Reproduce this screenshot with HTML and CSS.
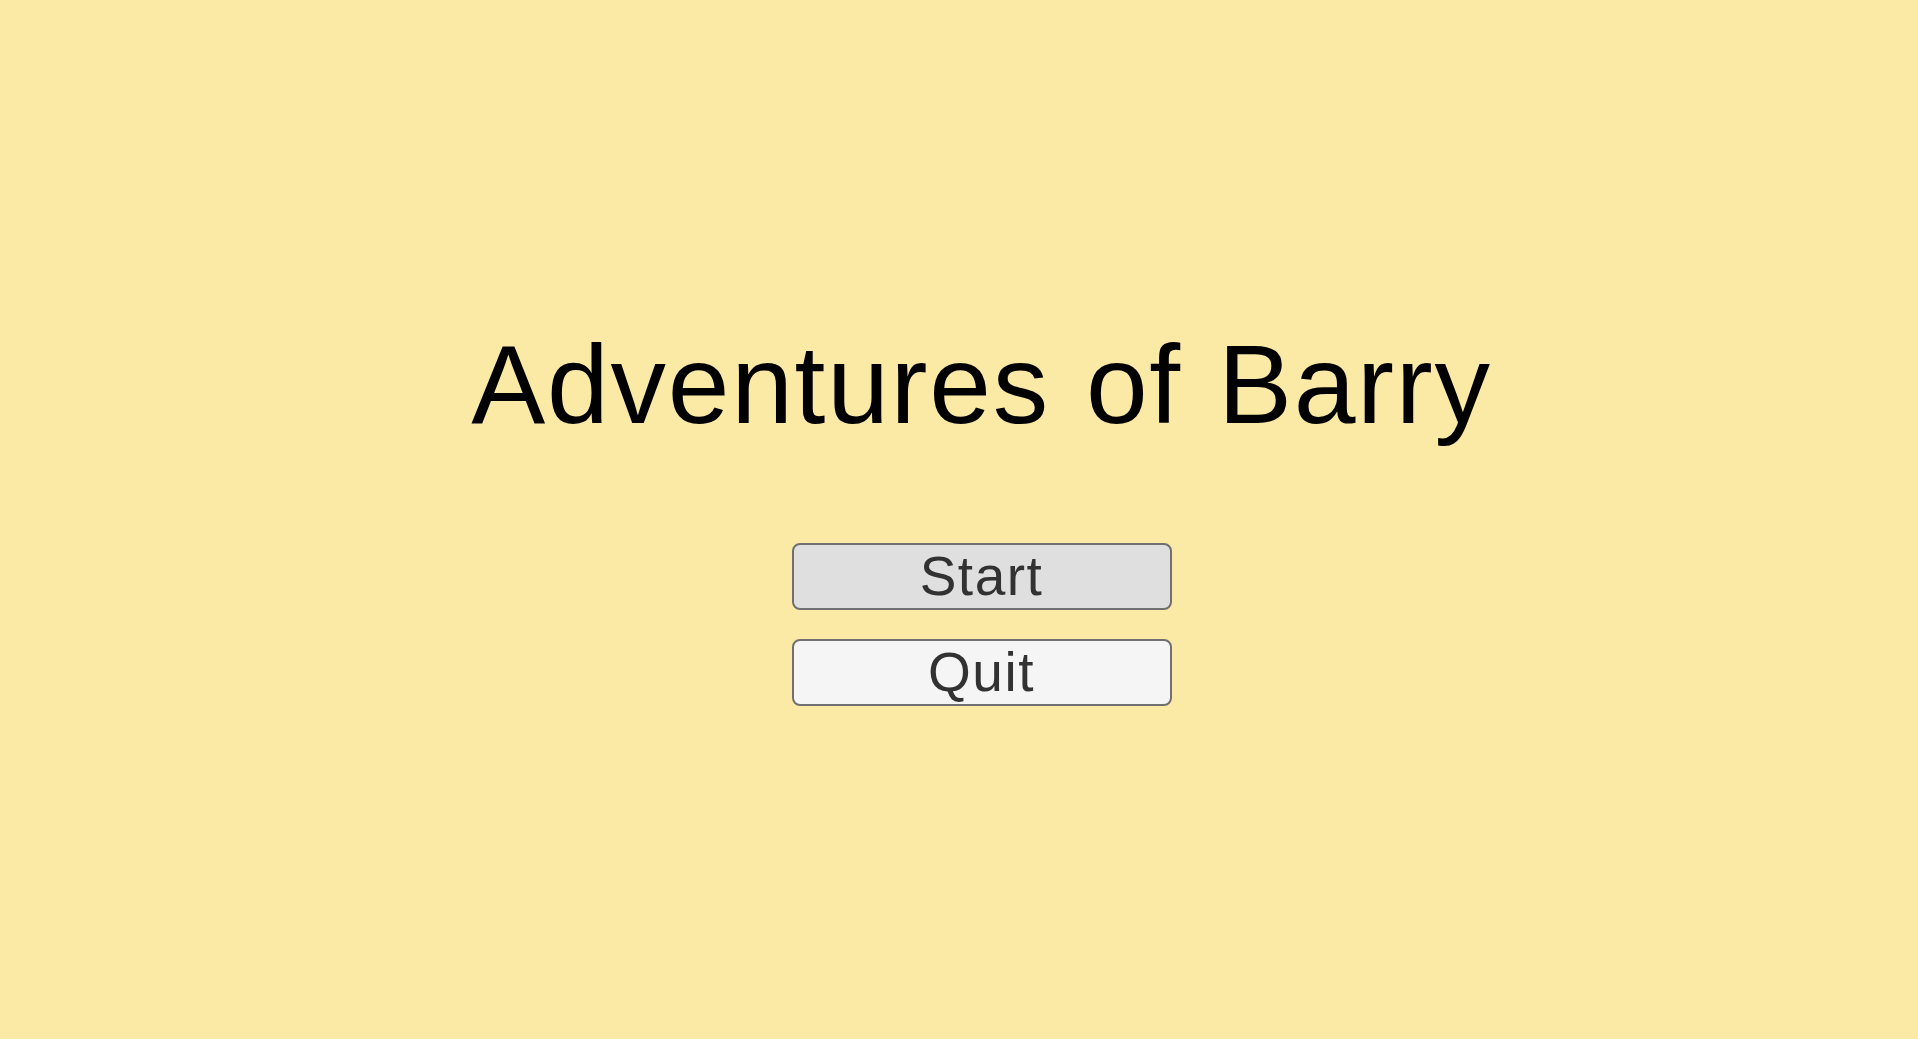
FILE: index.html
```html
<!DOCTYPE html>
<html lang="en">
<head>
<meta charset="utf-8">
<title>Adventures of Barry</title>
<link rel="stylesheet" href="styles.css">
</head>
<body>
<main class="menu">
  <h1 class="title">Adventures of Barry</h1>
  <div class="buttons">
    <button class="btn btn-start">Start</button>
    <button class="btn btn-quit">Quit</button>
  </div>
</main>
</body>
</html>
```
FILE: styles.css
```css
html, body {
  margin: 0;
  padding: 0;
  height: 100%;
  background: #fbeaa6;
}
body {
  font-family: "Liberation Sans", Arial, sans-serif;
}
.menu {
  display: flex;
  flex-direction: column;
  align-items: center;
  padding-top: 330px;
  padding-left: 45px;
}
.title {
  margin: 0;
  font-size: 111px;
  line-height: 1;
  font-weight: normal;
  color: #000;
  letter-spacing: 1.7px;
  word-spacing: 3.5px;
  white-space: nowrap;
}
.buttons {
  margin-top: 102px;
  display: flex;
  flex-direction: column;
  gap: 29px;
}
.btn {
  width: 380px;
  height: 67px;
  box-sizing: border-box;
  border: 2px solid #707070;
  border-radius: 8px;
  font-family: "Liberation Sans", Arial, sans-serif;
  font-size: 55px;
  line-height: 1;
  letter-spacing: 1.5px;
  color: #323232;
  padding: 0;
  display: flex;
  align-items: center;
  justify-content: center;
}
.btn-start {
  background: #dfdfdf;
}
.btn-quit {
  background: #f5f5f5;
}
```
